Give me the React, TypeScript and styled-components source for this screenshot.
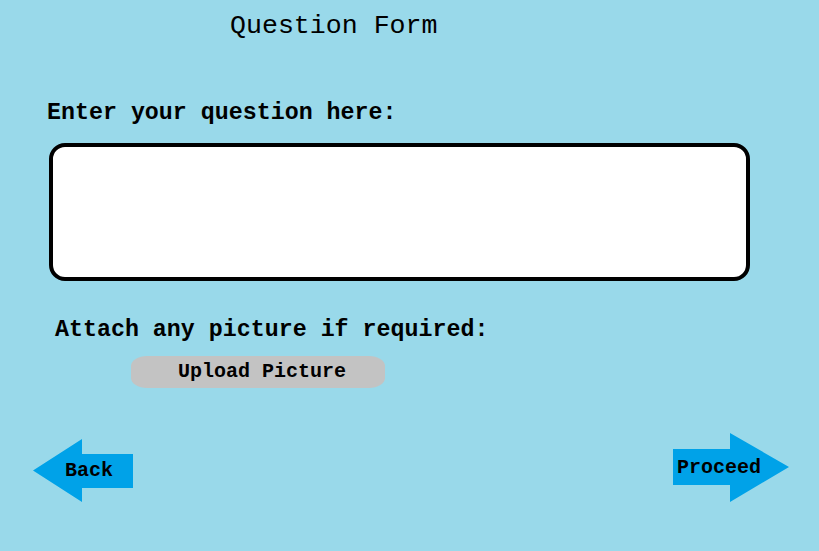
import React from "react";
import styled, { createGlobalStyle } from "styled-components";

const Global = createGlobalStyle`
  html, body {
    margin: 0;
    padding: 0;
    background: #99d9ea;
  }
  * { box-sizing: border-box; }
`;

const Page = styled.div`
  width: 819px;
  height: 551px;
  background: #99d9ea;
  font-family: "Liberation Mono", "Courier New", monospace;
  color: #000;
  display: flex;
  flex-direction: column;
  overflow: hidden;
`;

const Title = styled.h1`
  margin: 11px 0 0 230px;
  font-size: 26.6px;
  line-height: 30px;
  font-weight: normal;
`;

const Label = styled.div<{ $top: number; $left: number }>`
  margin: ${(p) => p.$top}px 0 0 ${(p) => p.$left}px;
  font-size: 23.3px;
  line-height: 26px;
  font-weight: bold;
  white-space: pre;
`;

const QuestionBox = styled.textarea`
  margin: 17px 0 0 49px;
  width: 701px;
  height: 138px;
  border: 4px solid #000;
  border-radius: 16px;
  background: #fff;
  resize: none;
  outline: none;
  font-family: inherit;
  font-size: 18px;
  padding: 10px 14px;
`;

const UploadButton = styled.button`
  margin: 13px 0 0 131px;
  width: 254px;
  height: 32px;
  border: none;
  border-radius: 16px / 10px;
  background: #c3c3c3;
  font-family: inherit;
  font-size: 20px;
  line-height: 32px;
  font-weight: bold;
  color: #000;
  padding: 0 0 0 8px;
  display: flex;
  align-items: center;
  justify-content: center;
  cursor: pointer;
`;

const NavRow = styled.div`
  margin-top: 45px;
  display: flex;
  justify-content: space-between;
  align-items: flex-start;
  padding: 0 30px 0 33px;
`;

const ArrowButton = styled.button<{
  $w: number;
  $h: number;
  $clip: string;
  $pad: number;
  $offset: number;
}>`
  width: ${(p) => p.$w}px;
  height: ${(p) => p.$h}px;
  margin-top: ${(p) => p.$offset}px;
  border: none;
  background: #00a2e8;
  clip-path: polygon(${(p) => p.$clip});
  font-family: "Liberation Mono", "Courier New", monospace;
  font-size: 20px;
  line-height: 20px;
  font-weight: bold;
  color: #000;
  display: flex;
  align-items: center;
  padding: 0 0 0 ${(p) => p.$pad}px;
  cursor: pointer;
`;

export default function App() {
  return (
    <Page>
      <Global />
      <Title>Question Form</Title>
      <Label $top={59} $left={47}>
        Enter your question here:
      </Label>
      <QuestionBox aria-label="Question" />
      <Label $top={36} $left={55}>
        Attach any picture if required:
      </Label>
      <UploadButton>Upload Picture</UploadButton>
      <NavRow>
        <ArrowButton
          $w={100}
          $h={63}
          $offset={6}
          $pad={32}
          $clip="0 31.5px, 49px 0, 49px 15px, 100px 15px, 100px 49px, 49px 49px, 49px 63px"
        >
          Back
        </ArrowButton>
        <ArrowButton
          $w={116}
          $h={69}
          $offset={0}
          $pad={4}
          $clip="0 16px, 57px 16px, 57px 0, 116px 34px, 57px 69px, 57px 52px, 0 52px"
        >
          Proceed
        </ArrowButton>
      </NavRow>
    </Page>
  );
}
